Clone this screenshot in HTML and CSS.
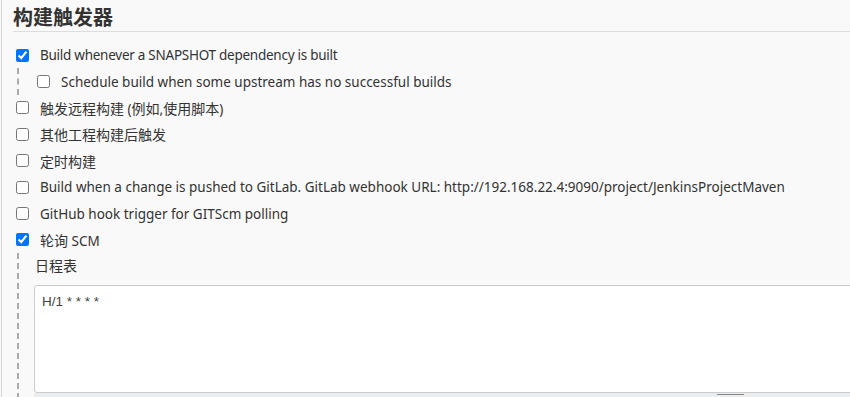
FILE: index.html
```html
<!DOCTYPE html>
<html lang="zh-CN">
<head>
<meta charset="utf-8">
<link rel="stylesheet" href="styles.css">
</head>
<body>
<div class="page">
  <section class="section">
    <h2 class="title">构建触发器</h2>
    <div class="row"><input type="checkbox" checked><span class="narrow">Build whenever a SNAPSHOT dependency is built</span></div>
    <div class="nested">
      <div class="row"><input type="checkbox"><span>Schedule build when some upstream has no successful builds</span></div>
    </div>
    <div class="row"><input type="checkbox"><span><span class="zh">触发远程构建</span> (<span class="zh">例如</span>,<span class="zh">使用脚本</span>)</span></div>
    <div class="row"><input type="checkbox"><span class="zh">其他工程构建后触发</span></div>
    <div class="row"><input type="checkbox"><span class="zh">定时构建</span></div>
    <div class="row"><input type="checkbox"><span>Build when a change is pushed to GitLab. GitLab webhook URL: http://192.168.22.4:9090/project/JenkinsProjectMaven</span></div>
    <div class="row"><input type="checkbox"><span>GitHub hook trigger for GITScm polling</span></div>
    <div class="row"><input type="checkbox" checked><span><span class="zh">轮询</span> SCM</span></div>
    <div class="nested sched">
      <div class="label zh">日程表</div>
      <div class="editor">
        <div class="code">H/1 * * * *</div>
      </div>
      <div class="handle"><span class="grip"></span></div>
    </div>
  </section>
</div>
</body>
</html>
```
FILE: styles.css
```css
* { box-sizing: border-box; }
html, body { margin: 0; padding: 0; }
body {
  width: 850px;
  height: 397px;
  overflow: hidden;
  background: #f9f9f9;
  font-family: "Noto Sans", "Noto Sans CJK SC", sans-serif;
  font-size: 13.5px;
  color: #333;
}
.page {
  border-left: 1px solid #d6d6d6;
  margin-left: 1px;
  height: 397px;
  padding-left: 11px;
}
.title {
  margin: 0;
  padding-top: 4px;
  height: 32px;
  font-size: 20px;
  font-weight: bold;
  line-height: 26px;
  color: #333;
  border-bottom: 1px solid #ddd;
  font-family: "Noto Sans CJK SC", sans-serif;
}
.zh { font-size: 14px; }
.narrow { letter-spacing: -0.26px; }
.row {
  display: flex;
  align-items: center;
  height: 26.4px;
  white-space: nowrap;
}
.section > .row:first-of-type { margin-top: 10px; }
.row input {
  width: 13px;
  height: 13px;
  margin: 0 11px 0 3px;
}
.nested {
  margin-left: 4px;
  border-left: 2px dashed #aaa;
  padding-left: 18px;
}
.nested .row input { margin-left: 0; }
.sched {
  padding-left: 15px;
  padding-top: 2px;
}
.label {
  height: 24px;
  line-height: 22px;
  padding-left: 1px;
}
.editor {
  margin-top: 6px;
  height: 108px;
  width: 840px;
  background: #fff;
  border: 1px solid #ccc;
  border-radius: 3px 0 0 3px;
  padding: 8px 7px;
}
.code {
  font-family: "Liberation Sans", Arial, sans-serif;
  font-size: 13.5px;
  color: #444;
}
.handle {
  height: 6px;
  width: 840px;
  background: #e9edf0;
  position: relative;
}
.grip {
  position: absolute;
  left: 683px;
  top: 1px;
  width: 27px;
  height: 1px;
  background: #888;
}
```
